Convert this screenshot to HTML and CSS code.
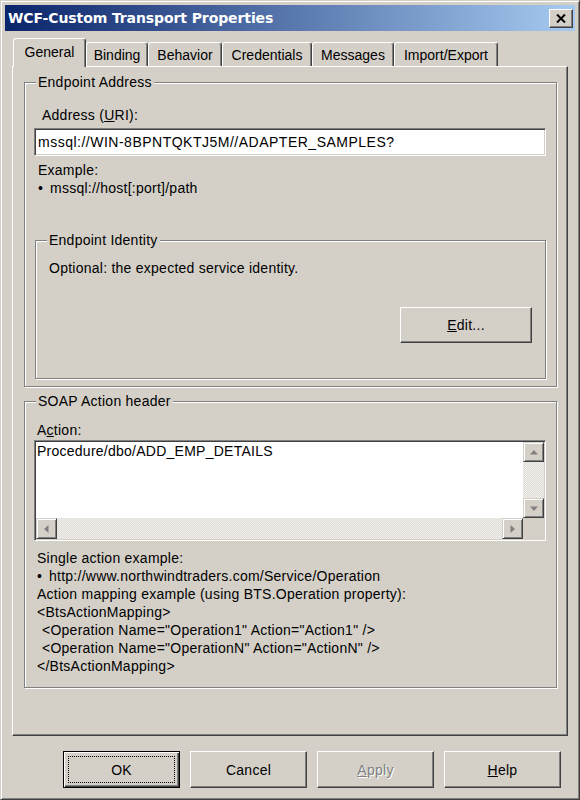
FILE: index.html
```html
<!DOCTYPE html>
<html>
<head>
<meta charset="utf-8">
<link rel="stylesheet" href="styles.css">
</head>
<body>
<div class="window">
  <div class="titlebar">
    <span class="title">WCF-Custom Transport Properties</span>
    <span class="close"><svg width="10" height="9" viewBox="0 0 10 9"><path d="M1 0.5 L9 8.5 M9 0.5 L1 8.5" stroke="#000" stroke-width="2" fill="none"/></svg></span>
  </div>
  <div class="tabs">
    <div class="tab selected w-general">General</div>
    <div class="tab w-binding">Binding</div>
    <div class="tab w-behavior">Behavior</div>
    <div class="tab w-cred">Credentials</div>
    <div class="tab w-msg">Messages</div>
    <div class="tab w-imp">Import/Export</div>
  </div>
  <div class="panel">
    <div class="group g-address">
      <span class="legend">Endpoint Address</span>
      <div class="lbl-address">Address (<u>U</u>RI):</div>
      <div class="input">mssql://WIN-8BPNTQKTJ5M//ADAPTER_SAMPLES?</div>
      <div class="note first">Example:</div>
      <div class="note"><span class="bullet">•</span>mssql://host[:port]/path</div>
      <div class="group g-identity">
        <span class="legend">Endpoint Identity</span>
        <div class="ident-text">Optional: the expected service identity.</div>
        <div class="edit-row"><div class="btn edit"><span><u>E</u>dit...</span></div></div>
      </div>
    </div>
    <div class="group g-soap">
      <span class="legend">SOAP Action header</span>
      <div class="lbl-action">A<u>c</u>tion:</div>
      <div class="textarea">
        <div class="ta-text">Procedure/dbo/ADD_EMP_DETAILS</div>
        <div class="vscroll">
          <div class="sbtn"><svg width="8" height="5" viewBox="0 0 8 5"><polygon points="4,0 8,4.5 0,4.5" fill="#808080"/></svg></div>
          <div class="track"></div>
          <div class="sbtn"><svg width="8" height="5" viewBox="0 0 8 5"><polygon points="0,0.5 8,0.5 4,5" fill="#808080"/></svg></div>
        </div>
        <div class="hscroll">
          <div class="sbtn"><svg width="5" height="8" viewBox="0 0 5 8"><polygon points="0,4 4.5,0 4.5,8" fill="#808080"/></svg></div>
          <div class="track"></div>
          <div class="sbtn"><svg width="5" height="8" viewBox="0 0 5 8"><polygon points="0.5,0 5,4 0.5,8" fill="#808080"/></svg></div>
        </div>
        <div class="corner"></div>
      </div>
      <div class="help">
        <div>Single action example:</div>
        <div><span class="bullet">•</span>http://www.northwindtraders.com/Service/Operation</div>
        <div>Action mapping example (using BTS.Operation property):</div>
        <div>&lt;BtsActionMapping&gt;</div>
        <div class="indent">&lt;Operation Name="Operation1" Action="Action1" /&gt;</div>
        <div class="indent">&lt;Operation Name="OperationN" Action="ActionN" /&gt;</div>
        <div>&lt;/BtsActionMapping&gt;</div>
      </div>
    </div>
  </div>
  <div class="buttons">
    <div class="btn bottom default"><div class="focus">OK</div></div>
    <div class="btn bottom">Cancel</div>
    <div class="btn bottom disabled"><span><u>A</u>pply</span></div>
    <div class="btn bottom"><span><u>H</u>elp</span></div>
  </div>
</div>
</body>
</html>
```
FILE: styles.css
```css
* { box-sizing: border-box; }
body {
  margin: 0;
  background: #d4d0c8;
  font-family: "Liberation Sans", Arial, sans-serif;
  font-size: 14px;
  letter-spacing: 0.25px;
  color: #000;
}
.window {
  width: 580px;
  height: 800px;
  border: 1px solid;
  border-color: #d4d0c8 #404040 #404040 #d4d0c8;
  box-shadow: inset 1px 1px #fff, inset -1px -1px #808080;
  padding: 4px;
  display: flex;
  flex-direction: column;
}
.titlebar {
  height: 26px;
  flex: none;
  display: flex;
  align-items: center;
  justify-content: space-between;
  padding: 0 2px 0 3px;
  background: linear-gradient(to right, #0a246a, #a6caf0);
}
.title {
  font-family: "DejaVu Sans", Verdana, sans-serif;
  font-weight: bold;
  font-size: 14px;
  color: #fff;
  letter-spacing: -0.1px;
}
.close {
  width: 24px;
  height: 19px;
  background: #d4d0c8;
  border: 1px solid;
  border-color: #fff #404040 #404040 #fff;
  box-shadow: inset -1px -1px #808080;
  display: flex;
  align-items: center;
  justify-content: center;
}
.tabs {
  display: flex;
  align-items: flex-end;
  height: 28px;
  margin-top: 7px;
  padding-left: 8px;
  flex: none;
}
.tab {
  height: 24px;
  border: 1px solid;
  border-bottom: none;
  border-color: #fff #404040 transparent #fff;
  box-shadow: inset -1px 0 #808080;
  border-radius: 3px 3px 0 0;
  display: flex;
  align-items: center;
  justify-content: center;
  background: #d4d0c8;
  flex: none;
  letter-spacing: 0;
}
.tab.selected {
  height: 29px;
  margin-bottom: -1px;
  padding-bottom: 3px;
  position: relative;
  z-index: 1;
}
.w-general { width: 73px; }
.w-binding { width: 62px; }
.w-behavior { width: 74px; }
.w-cred { width: 90px; }
.w-msg { width: 82px; }
.w-imp { width: 104px; }
.panel {
  height: 670px;
  flex: none;
  margin: 0 7px;
  border: 1px solid;
  border-color: #fff #404040 #404040 #fff;
  box-shadow: inset -1px -1px #808080;
  padding: 15px 10px 0 11px;
}
.group {
  position: relative;
  border: 1px solid #808080;
  box-shadow: inset 1px 1px #fff, 1px 1px #fff;
}
.legend {
  position: absolute;
  top: -9px;
  left: 11px;
  padding: 0 2px;
  background: #d4d0c8;
  line-height: 16px;
  white-space: nowrap;
}
.g-address {
  height: 305px;
  padding: 24px 0 0 9px;
}
.lbl-address {
  margin-left: 8px;
  line-height: 16px;
}
.input {
  margin-top: 5px;
  width: 512px;
  height: 28px;
  border: 1px solid;
  border-color: #808080 #fff #fff #808080;
  box-shadow: inset 1px 1px #404040, inset -1px -1px #d4d0c8;
  background: #fff;
  padding: 0 0 0 3px;
  display: flex;
  align-items: center;
  white-space: nowrap;
  letter-spacing: 0.5px;
}
.note {
  margin-left: 4px;
  line-height: 18px;
}
.note.first { margin-top: 5px; }
.bullet {
  display: inline-block;
  width: 12px;
}
.g-identity {
  margin: 43px 0 0 1px;
  width: 511px;
  height: 139px;
  padding: 0 13px;
}
.ident-text {
  margin-top: 19px;
  line-height: 16px;
}
.edit-row {
  display: flex;
  justify-content: flex-end;
  margin-top: 31px;
}
.btn {
  display: flex;
  align-items: center;
  justify-content: center;
  background: #d4d0c8;
  border: 1px solid;
  border-color: #fff #404040 #404040 #fff;
  box-shadow: inset -1px -1px #808080;
  flex: none;
}
.btn.edit {
  width: 132px;
  height: 36px;
}
.g-soap {
  margin-top: 14px;
  height: 287px;
  padding: 20px 0 0 9px;
}
.lbl-action {
  margin-left: 3px;
  line-height: 16px;
}
.textarea {
  margin-top: 2px;
  width: 512px;
  height: 101px;
  border: 1px solid;
  border-color: #808080 #fff #fff #808080;
  box-shadow: inset 1px 1px #404040, inset -1px -1px #d4d0c8;
  background: #fff;
  padding: 1px;
  display: grid;
  grid-template-columns: 1fr 21px;
  grid-template-rows: 1fr 21px;
}
.ta-text {
  padding: 1px 0 0 1px;
  line-height: 16px;
  white-space: nowrap;
}
.vscroll {
  display: flex;
  flex-direction: column;
}
.hscroll {
  display: flex;
}
.sbtn {
  width: 21px;
  height: 20px;
  flex: none;
  background: #d4d0c8;
  border: 1px solid;
  border-color: #d4d0c8 #404040 #404040 #d4d0c8;
  box-shadow: inset 1px 1px #fff, inset -1px -1px #808080;
  display: flex;
  align-items: center;
  justify-content: center;
}
.hscroll .sbtn { height: 21px; }
.track {
  flex: 1;
  background: repeating-conic-gradient(#f4f3f1 0 25%, #dcd9d2 0 50%) 0 0 / 2px 2px;
}
.corner { background: #d4d0c8; }
.help {
  margin: 8px 0 0 3px;
  line-height: 18px;
  white-space: nowrap;
}
.indent { padding-left: 5px; }
.buttons {
  display: flex;
  justify-content: flex-end;
  gap: 10px;
  margin-top: 15px;
  padding-right: 14px;
  flex: none;
}
.btn.bottom {
  width: 117px;
  height: 37px;
}
.btn.default {
  border: 1px solid #000;
  box-shadow: inset 1px 1px #fff, inset -1px -1px #404040, inset -2px -2px #808080;
  padding: 4px;
}
.focus {
  width: 100%;
  height: 100%;
  border: 1px dotted #000;
  display: flex;
  align-items: center;
  justify-content: center;
}
.btn.disabled {
  color: #808080;
  text-shadow: 1px 1px #fff;
}
```
